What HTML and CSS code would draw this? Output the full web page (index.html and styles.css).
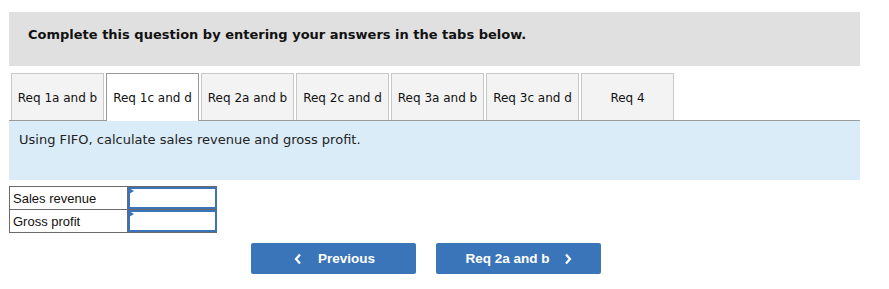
FILE: index.html
```html
<!DOCTYPE html>
<html>
<head>
<meta charset="utf-8">
<link rel="stylesheet" href="styles.css">
</head>
<body>
<div class="wrap">
  <div class="intro">Complete this question by entering your answers in the tabs below.</div>
  <div class="tabs">
    <div class="tab">Req 1a and b</div>
    <div class="tab active">Req 1c and d</div>
    <div class="tab">Req 2a and b</div>
    <div class="tab">Req 2c and d</div>
    <div class="tab">Req 3a and b</div>
    <div class="tab">Req 3c and d</div>
    <div class="tab">Req 4</div>
  </div>
  <div class="panel">Using FIFO, calculate sales revenue and gross profit.</div>
  <table class="grid">
    <tr><td class="label">Sales revenue</td><td class="cell"><div class="inp"><span class="flag"></span></div></td></tr>
    <tr><td class="label">Gross profit</td><td class="cell"><div class="inp"><span class="flag"></span></div></td></tr>
  </table>
  <div class="nav">
    <button class="btn"><svg class="chev" width="8" height="12" viewBox="0 0 8 12"><path d="M6 1.5 L2 6 L6 10.5" fill="none" stroke="#fff" stroke-width="2.2"/></svg><span>Previous</span></button>
    <button class="btn next"><span>Req 2a and b</span><svg class="chev" width="8" height="12" viewBox="0 0 8 12"><path d="M2 1.5 L6 6 L2 10.5" fill="none" stroke="#fff" stroke-width="2.2"/></svg></button>
  </div>
</div>
</body>
</html>
```

FILE: styles.css
```css
html, body { margin: 0; padding: 0; background: #fff; }
body { font-family: "DejaVu Sans", Verdana, sans-serif; }
.wrap { margin: 12px 0 0 9px; width: 851px; }
.intro {
  height: 54px; background: #e0e0e0; box-sizing: border-box;
  padding: 15px 0 0 19px; font-weight: bold; font-size: 13px; color: #111;
}
.tabs { display: flex; gap: 2px; padding-left: 2px; margin-top: 7px; border-bottom: 1px solid #9a9a9a; height: 47px; }
.tab {
  width: 93px; height: 47px; box-sizing: border-box; background: #f3f3f3;
  border: 1px solid #c8c8c8; border-bottom: none; font-size: 12px; color: #111;
  display: flex; align-items: center; justify-content: center; padding-top: 1px;
  white-space: nowrap;
}
.tab.active { background: #fff; border-color: #9a9a9a; height: 48px; position: relative; z-index: 1; padding-top: 0; }
.panel {
  height: 59px; background: #dbecf9; box-sizing: border-box; padding: 11px 0 0 10px;
  font-size: 13px; color: #222;
}
.grid { border-collapse: collapse; margin-top: 6px; font-family: "Liberation Sans", Arial, sans-serif; font-size: 13px; }
.grid td { border: 1px solid #6b6b6b; height: 22px; padding: 0; }
.label { width: 114px; padding-left: 3px !important; color: #111; }
.cell { width: 88px; }
.inp { position: relative; height: 22px; box-sizing: border-box; border: 2px solid #3b73b9; margin: 0 -1px 0 0; }
.flag { position: absolute; left: -1px; top: -1px; width: 0; height: 0; border-top: 3px solid transparent; border-bottom: 3px solid transparent; border-left: 5px solid #3b73b9; }
.nav { display: flex; gap: 20px; margin-left: 242px; margin-top: 10px; }
.btn {
  width: 165px; height: 31px; background: #3a75ba; border: none; border-radius: 2px;
  color: #fff; font-family: "Liberation Sans", Arial, sans-serif; font-weight: bold; font-size: 13.5px;
  display: flex; align-items: center; justify-content: center; gap: 16px; padding: 0 0 0 2px;
}
.btn.next { gap: 14px; padding-left: 0; padding-right: 0; }
.chev { display: block; }
```
